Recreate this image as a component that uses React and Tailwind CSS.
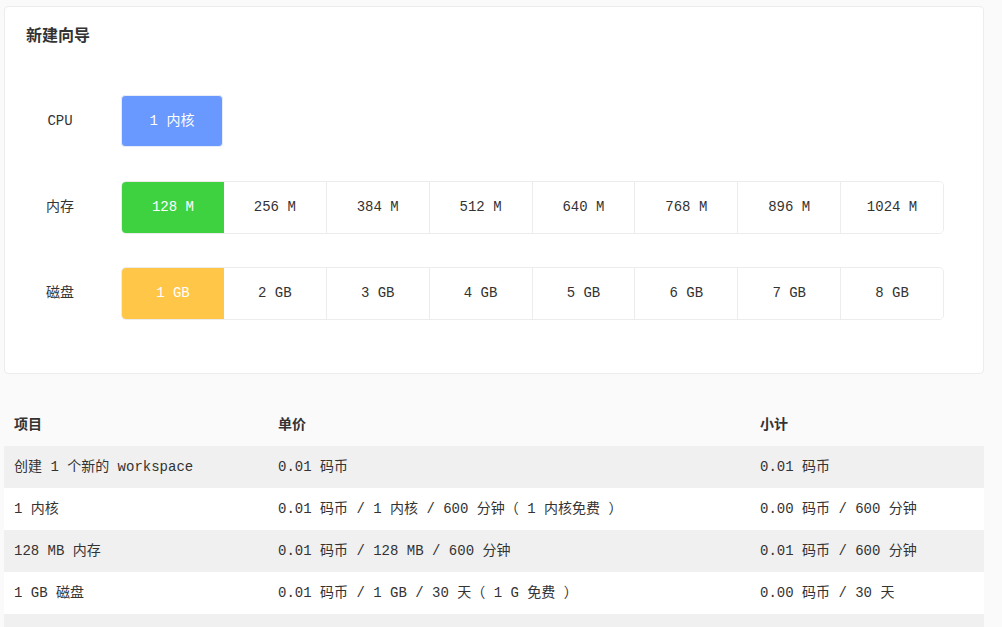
import React from "react";

const font = { fontFamily: '"Liberation Mono", "Noto Sans CJK SC", monospace' };

function Row({ label, children, className = "" }) {
  return (
    <div className={"flex items-center " + className}>
      <div className="w-[68px] mr-[27px] text-center text-[14px] text-[#333]">{label}</div>
      {children}
    </div>
  );
}

function Group({ items, color }) {
  return (
    <div className="flex w-[823px] h-[53px] border border-[#ececec] rounded-[5px] overflow-hidden">
      {items.map((it, i) => (
        <div
          key={it}
          className={
            "flex-1 flex items-center justify-center text-[14px] " +
            (i === 0 ? color + " text-white" : "text-[#333] bg-white") +
            (i > 1 ? " border-l border-[#ececec]" : "")
          }
        >
          {it}
        </div>
      ))}
    </div>
  );
}

const rows = [
  ["创建 1 个新的 workspace", "0.01 码币", "0.01 码币"],
  ["1 内核", "0.01 码币 / 1 内核 / 600 分钟（ 1 内核免费 ）", "0.00 码币 / 600 分钟"],
  ["128 MB 内存", "0.01 码币 / 128 MB / 600 分钟", "0.01 码币 / 600 分钟"],
  ["1 GB 磁盘", "0.01 码币 / 1 GB / 30 天（ 1 G 免费 ）", "0.00 码币 / 30 天"],
  ["", "", ""],
];

export default function App() {
  return (
    <div className="min-h-screen bg-[#fafafa] text-[#333]" style={font}>
      <div className="ml-[4px] pt-[6px] w-[980px]">
        <div className="bg-white border border-[#ececec] rounded-[4px] px-[21px] pt-[20px] pb-[53px]">
          <div className="text-[16px] font-bold leading-[20px] text-[#333]">新建向导</div>
          <div className="mt-[48px] flex flex-col">
            <Row label="CPU">
              <div className="w-[102px] h-[52px] rounded-[4px] bg-[#6998ff] border border-[#e6ecf8] text-white text-[14px] flex items-center justify-center">
                1 内核
              </div>
            </Row>
            <Row label="内存" className="mt-[34px]">
              <Group
                color="bg-[#3ed240]"
                items={["128 M", "256 M", "384 M", "512 M", "640 M", "768 M", "896 M", "1024 M"]}
              />
            </Row>
            <Row label="磁盘" className="mt-[33px]">
              <Group
                color="bg-[#ffc647]"
                items={["1 GB", "2 GB", "3 GB", "4 GB", "5 GB", "6 GB", "7 GB", "8 GB"]}
              />
            </Row>
          </div>
        </div>

        <div className="mt-[30px] text-[14px]">
          <div className="flex h-[42px] items-center font-bold">
            <div className="w-[264px] pl-[10px]">项目</div>
            <div className="w-[482px] pl-[10px]">单价</div>
            <div className="flex-1 pl-[10px]">小计</div>
          </div>
          {rows.map((r, i) => (
            <div
              key={i}
              className={"flex h-[42px] items-center " + (i % 2 === 0 ? "bg-[#f0f0f0]" : "bg-white")}
            >
              <div className="w-[264px] pl-[10px] whitespace-nowrap">{r[0]}</div>
              <div className="w-[482px] pl-[10px] whitespace-nowrap">{r[1]}</div>
              <div className="flex-1 pl-[10px] whitespace-nowrap">{r[2]}</div>
            </div>
          ))}
        </div>
      </div>
    </div>
  );
}
